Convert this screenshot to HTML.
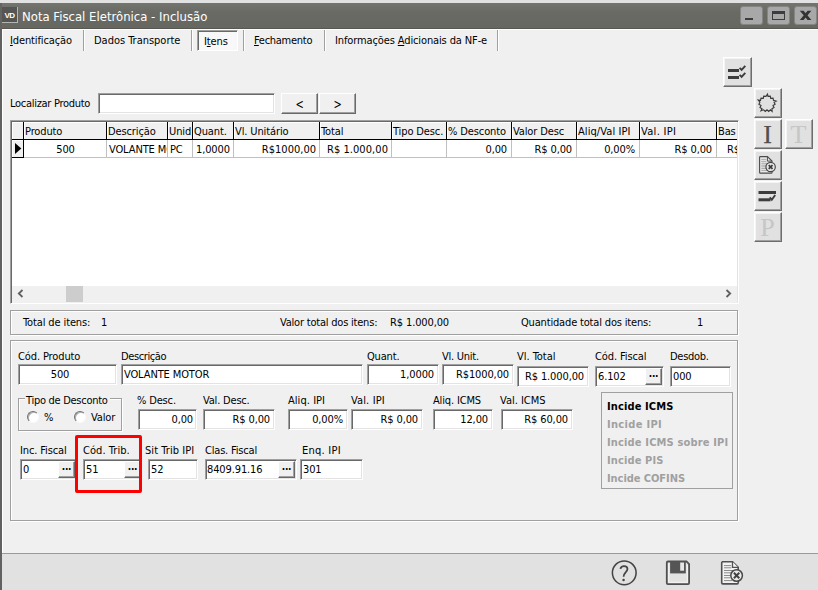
<!DOCTYPE html>
<html lang="pt-BR">
<head>
<meta charset="utf-8">
<title>Nota Fiscal Eletrônica - Inclusão</title>
<style>
html,body{margin:0;padding:0}
body{width:818px;height:590px;position:relative;overflow:hidden;background:#f0f0f0;
 font-family:"DejaVu Sans Condensed","Liberation Sans",sans-serif;font-size:11px;color:#000;letter-spacing:-0.12px}
.a{position:absolute}
.t{position:absolute;white-space:nowrap;line-height:13px;height:13px}
.r{text-align:right}
.c{text-align:center}
u{text-decoration:underline;text-underline-offset:1px}
.inp{position:absolute;background:#fff;box-sizing:border-box;border:1px solid;border-color:#a0a0a0 #fff #fff #a0a0a0;
 box-shadow:inset 1px 1px 0 #696969,inset -1px -1px 0 #e3e3e3}
.btn{position:absolute;background:#f0f0f0;box-sizing:border-box;border:1px solid;border-color:#fff #696969 #696969 #fff;
 box-shadow:inset -1px -1px 0 #a0a0a0}
.tb{position:absolute;background:#e1e1e1;box-sizing:border-box;border:1px solid;border-color:#fff #6d6d6d #6d6d6d #fff;
 box-shadow:inset -1px -1px 0 #a0a0a0,inset 1px 1px 0 #f4f4f4;width:28px;height:30px}
.sep{position:absolute;width:1px;height:21px;top:30px;background:#a0a0a0;box-shadow:1px 0 0 #fff}
.pnl{position:absolute;box-sizing:border-box;border:1px solid #a0a0a0;box-shadow:1px 1px 0 #fff,inset 1px 1px 0 #fff}
.hc{position:absolute;top:122px;height:18px;box-sizing:border-box;background:#f0f0f0;border-right:1px solid #000;border-bottom:1px solid #000;
 box-shadow:inset 1px 1px 0 #fff;overflow:hidden}
.hc span{position:absolute;left:1px;top:3px;line-height:13px;white-space:nowrap}
.dc{position:absolute;top:140px;height:18px;box-sizing:border-box;background:#fff;border-right:1px solid #c0c0c0;border-bottom:1px solid #c0c0c0;overflow:hidden}
.dc span{position:absolute;top:3px;line-height:13px;white-space:nowrap}
.dots{position:absolute;left:0;right:0;top:0;bottom:0}
.inc{position:absolute;left:607px;letter-spacing:0.12px;font-weight:bold;color:#a0a0a0;white-space:nowrap;line-height:13px;font-family:"DejaVu Sans Condensed","Liberation Sans",sans-serif}
</style>
</head>
<body>

<!-- window chrome -->
<div class="a" style="left:0;top:0;width:818px;height:3px;background:#e2e2e2"></div>
<div class="a" style="left:0;top:3px;width:818px;height:26px;background:linear-gradient(#74756f,#696a64 35%,#666761)"></div>
<div class="a" style="left:0;top:28px;width:818px;height:1px;background:#575852"></div>
<div class="a" style="left:0;top:3px;width:2px;height:26px;background:#636362"></div>
<div class="a" style="left:0;top:29px;width:2px;height:561px;background:#616161"></div>
<div class="a" style="left:2px;top:29px;width:816px;height:1px;background:#fff"></div>
<div class="a" style="left:2px;top:29px;width:1px;height:524px;background:#fff"></div>

<!-- app icon -->
<div class="a" style="left:2px;top:7px;width:16px;height:16px;background:#555654;border-right:1px solid #b4b4b0;border-bottom:1px solid #b4b4b0;box-sizing:border-box"></div>
<div class="t" style="left:4.5px;top:11px;width:12px;font-size:8px;font-weight:bold;color:#fff;line-height:10px;height:10px;letter-spacing:-0.7px;font-family:'Liberation Sans',sans-serif">VD</div>
<div class="t" id="title" style="left:22px;top:9px;font-size:13px;line-height:16px;height:16px;color:#fff;letter-spacing:0">Nota Fiscal Eletrônica - Inclusão</div>

<!-- caption buttons -->
<div class="a" style="left:740px;top:6px;width:23px;height:19px;box-sizing:border-box;background:#a8a8a8;border:1px solid #858583;border-radius:3px"></div>
<div class="a" style="left:767px;top:6px;width:23px;height:19px;box-sizing:border-box;background:#a8a8a8;border:1px solid #858583;border-radius:3px"></div>
<div class="a" style="left:794px;top:6px;width:23px;height:19px;box-sizing:border-box;background:#a8a8a8;border:1px solid #858583;border-radius:3px"></div>
<div class="a" style="left:745px;top:18px;width:8px;height:2px;background:#3c3c3c"></div>
<div class="a" style="left:772px;top:11px;width:13px;height:9px;box-sizing:border-box;border:1px solid #3c3c3c;border-top-width:3px"></div>
<svg class="a" style="left:799px;top:10px" width="14" height="11" viewBox="0 0 14 11"><path d="M0.800 0.800 H4.600 L12.400 10 H8.600Z" fill="#333"/><path d="M12.400 0.800 H8.600 L0.800 10 H4.600Z" fill="#333"/></svg>

<!-- tabs -->
<div class="t" style="left:10px;top:34px"><u>I</u>dentificação</div>
<div class="sep" style="left:83px"></div>
<div class="t" style="left:94px;top:34px;letter-spacing:-0.02px">Dados Transporte</div>
<div class="sep" style="left:191px"></div>
<div class="a" style="left:197px;top:30px;width:41px;height:21px;box-sizing:border-box;background:#f8f8f8;border:1px solid;border-color:#a0a0a0 #fff #fff #a0a0a0;box-shadow:inset 1px 1px 0 #696969"></div>
<div class="t" style="left:204px;top:35px">I<u>t</u>ens</div>
<div class="sep" style="left:243px"></div>
<div class="t" style="left:254px;top:34px;letter-spacing:-0.27px"><u>F</u>echamento</div>
<div class="sep" style="left:324px"></div>
<div class="t" style="left:335px;top:34px">Informações <u>A</u>dicionais da NF-e</div>
<div class="sep" style="left:497px"></div>

<!-- search -->
<div class="t" style="left:10px;top:97px;letter-spacing:-0.29px">Localizar Produto</div>
<div class="inp" style="left:98px;top:93px;width:177px;height:21px"></div>
<div class="btn" style="left:281px;top:93px;width:37px;height:21px"></div>
<div class="btn" style="left:319px;top:93px;width:37px;height:21px"></div>
<div class="t c" style="left:281px;top:98px;width:37px;transform:scaleY(1.3)">&lt;</div>
<div class="t c" style="left:319px;top:98px;width:37px;transform:scaleY(1.3)">&gt;</div>

<!-- grid -->
<div class="a" style="left:10px;top:120px;width:729px;height:184px;box-sizing:border-box;background:#fff;border:1px solid;border-color:#a0a0a0 #fff #fff #a0a0a0;box-shadow:inset 1px 1px 0 #696969,inset -1px -1px 0 #e3e3e3"></div>
<div class="a" id="gridclip" style="left:0;top:0;width:737px;height:302px;overflow:hidden">
<div class="hc" style="left:12px;width:12px"></div>
<div class="hc" style="left:24px;width:83px"><span>Produto</span></div>
<div class="hc" style="left:107px;width:61px"><span>Descrição</span></div>
<div class="hc" style="left:168px;width:25px"><span>Unid</span></div>
<div class="hc" style="left:193px;width:41px"><span>Quant.</span></div>
<div class="hc" style="left:234px;width:86px"><span>Vl. Unitário</span></div>
<div class="hc" style="left:320px;width:72px"><span>Total</span></div>
<div class="hc" style="left:392px;width:55px"><span>Tipo Desc.</span></div>
<div class="hc" style="left:447px;width:65px"><span>% Desconto</span></div>
<div class="hc" style="left:512px;width:65px"><span>Valor Desc</span></div>
<div class="hc" style="left:577px;width:63px"><span style="letter-spacing:0.08px">Aliq/Val IPI</span></div>
<div class="hc" style="left:640px;width:77px"><span style="letter-spacing:0.3px">Val. IPI</span></div>
<div class="hc" style="left:717px;width:60px"><span>Bas</span></div>

<div class="dc" style="left:12px;width:12px;background:#f0f0f0;border-right:1px solid #000;border-bottom:1px solid #000;box-shadow:inset 1px 1px 0 #fff"></div>
<svg class="a" style="left:15px;top:143px" width="7" height="11" viewBox="0 0 7 11"><path d="M0 0 L6.300 5.500 L0 11Z" fill="#000"/></svg>
<div class="dc" style="left:24px;width:83px"><span class="c" style="left:0;width:83px">500</span></div>
<div class="dc" style="left:107px;width:61px"><span style="left:2px">VOLANTE MOTOR</span></div>
<div class="dc" style="left:168px;width:25px"><span style="left:2px">PC</span></div>
<div class="dc" style="left:193px;width:41px"><span style="left:3px">1,0000</span></div>
<div class="dc" style="left:234px;width:86px"><span class="r" style="right:3px;letter-spacing:0.01px">R$1000,00</span></div>
<div class="dc" style="left:320px;width:72px"><span class="r" style="right:3px;letter-spacing:0.06px">R$ 1.000,00</span></div>
<div class="dc" style="left:392px;width:55px"></div>
<div class="dc" style="left:447px;width:65px"><span class="r" style="right:4px">0,00</span></div>
<div class="dc" style="left:512px;width:65px"><span class="r" style="right:4px">R$ 0,00</span></div>
<div class="dc" style="left:577px;width:63px"><span class="r" style="right:4px">0,00%</span></div>
<div class="dc" style="left:640px;width:77px"><span class="r" style="right:4px">R$ 0,00</span></div>
<div class="dc" style="left:717px;width:60px"><span style="left:10px">R$ 0,00</span></div>
</div>
<!-- scrollbar -->
<div class="a" style="left:12px;top:286px;width:725px;height:17px;background:#f0f0f0"></div>
<div class="a" style="left:66px;top:286px;width:17px;height:16px;background:#cdcdcd"></div>
<svg class="a" style="left:17px;top:289px" width="7" height="9" viewBox="0 0 7 9"><path d="M5.5 1 L1.8 4.5 L5.5 8" stroke="#606060" stroke-width="1.8" fill="none"/></svg>
<svg class="a" style="left:725px;top:289px" width="7" height="9" viewBox="0 0 7 9"><path d="M1.5 1 L5.2 4.5 L1.5 8" stroke="#606060" stroke-width="1.8" fill="none"/></svg>

<!-- right tool buttons -->
<div class="tb" style="left:723px;top:57px;width:29px;height:30px"></div>
<svg class="a" style="left:723px;top:57px" width="29" height="30" viewBox="0 0 29 30">
 <rect x="5" y="12" width="11" height="3" fill="#3c3c3c"/><rect x="5" y="19" width="11" height="3" fill="#3c3c3c"/>
 <path d="M16.600 10.800 L18.600 12.800 L22.300 8.800" stroke="#3c3c3c" stroke-width="1.9" fill="none"/>
 <path d="M16.600 17.900 L18.600 19.900 L22.300 15.900" stroke="#3c3c3c" stroke-width="1.9" fill="none"/>
</svg>
<div class="tb" style="left:754px;top:88px"></div>
<svg class="a" style="left:0;top:0" width="818" height="130" viewBox="0 0 818 130"><path d="M767.5 94.1 L768.0 96.4 L770.3 96.1 L770.7 98.4 L773.0 98.1 L773.5 100.4 L776.1 101.1 L774.1 102.2 L775.1 104.3 L773.0 105.5 L774.0 107.6 L772.0 108.7 L772.1 111.4 L770.4 109.8 L768.7 111.4 L767.0 109.8 L765.3 111.4 L763.6 109.8 L761.0 110.8 L762.0 108.7 L760.0 107.6 L761.0 105.5 L758.9 104.3 L759.9 102.2 L758.2 100.1 L760.5 100.4 L761.0 98.1 L763.3 98.4 L763.7 96.1 L766.0 96.4Z" fill="none" stroke="#3a3a3a" stroke-width="1.15" stroke-linejoin="miter"/></svg>
<div class="tb" style="left:754px;top:119px"></div>
<div class="t c" style="left:754px;top:119px;width:27px;height:30px;line-height:31px;font-family:'Liberation Serif',serif;font-size:26px;color:#505050;letter-spacing:0;-webkit-text-stroke:0.25px #505050">I</div>
<div class="tb" style="left:785px;top:119px"></div>
<div class="t c" style="left:785px;top:119px;width:27px;height:30px;line-height:31px;font-family:'Liberation Serif',serif;font-size:26px;color:#c6c6c6;letter-spacing:0">T</div>
<div class="tb" style="left:754px;top:150px"></div>
<svg class="a" style="left:754px;top:150px" width="28" height="30" viewBox="0 0 28 30">
 <path d="M6.300 6.600 H13.400 L18 11.100 V22.400 Q18 23.100 17.300 23.100 H6.300 Q5.600 23.100 5.600 22.400 V7.300 Q5.600 6.600 6.300 6.600Z" fill="#e9e9e9" stroke="#4c4c4c" stroke-width="1.100"/>
 <path d="M13.400 6.600 V11.100 H18" fill="none" stroke="#4c4c4c" stroke-width="1"/>
 <path d="M7.300 9.400H12.200 M7.300 11.400H12.200 M7.300 13.300H13 M7.300 15.200H12 M7.300 16.800H11.500 M7.300 18.500H12 M7.300 20.400H13.500" stroke="#a4a4a4" stroke-width="0.900"/>
 <circle cx="16.6" cy="17" r="4.700" fill="#e6e6e6" stroke="#484848" stroke-width="1.200"/>
 <path d="M14.700 15.100 L18.500 18.900 M18.500 15.100 L14.700 18.900" stroke="#3a3a3a" stroke-width="1.700"/>
</svg>
<div class="tb" style="left:754px;top:181px"></div>
<svg class="a" style="left:754px;top:181px" width="28" height="29" viewBox="0 0 28 29">
 <rect x="4.500" y="10" width="17.500" height="3" fill="#3c3c3c"/><rect x="4.500" y="17.300" width="12" height="3" fill="#3c3c3c"/>
 <path d="M15.700 16.400 L17.800 18.700 L21.200 14" stroke="#3c3c3c" stroke-width="1.9" fill="none"/>
</svg>
<div class="tb" style="left:754px;top:212px"></div>
<div class="t c" style="left:754px;top:212px;width:27px;height:30px;line-height:31px;font-family:'Liberation Serif',serif;font-size:26px;color:#c6c6c6;letter-spacing:0">P</div>

<!-- summary panel -->
<div class="pnl" style="left:10px;top:310px;width:728px;height:25px"></div>
<div class="t" style="left:23px;top:316px">Total de itens:</div>
<div class="t" style="left:101px;top:316px">1</div>
<div class="t" style="left:280px;top:316px;letter-spacing:-0.21px">Valor total dos itens:</div>
<div class="t" style="left:390px;top:316px">R$ 1.000,00</div>
<div class="t" style="left:521px;top:316px;letter-spacing:-0.17px">Quantidade total dos itens:</div>
<div class="t" style="left:697px;top:316px">1</div>

<!-- detail panel -->
<div class="pnl" style="left:10px;top:340px;width:728px;height:181px"></div>

<div class="t" style="left:18px;top:350px">Cód. Produto</div>
<div class="inp" style="left:18px;top:364px;width:99px;height:21px"></div>
<div class="t c" style="left:18px;top:368px;width:84px">500</div>
<div class="t" style="left:121px;top:350px;letter-spacing:-0.4px">Descrição</div>
<div class="inp" style="left:121px;top:364px;width:242px;height:21px"></div>
<div class="t" style="left:124px;top:368px">VOLANTE MOTOR</div>
<div class="t" style="left:367px;top:350px;letter-spacing:-0.18px">Quant.</div>
<div class="inp" style="left:367px;top:364px;width:72px;height:21px"></div>
<div class="t r" style="left:367px;top:368px;width:67px">1,0000</div>
<div class="t" style="left:442px;top:350px;letter-spacing:-0.25px">Vl. Unit.</div>
<div class="inp" style="left:442px;top:364px;width:72px;height:21px"></div>
<div class="t r" style="left:442px;top:368px;width:67px">R$1000,00</div>
<div class="t" style="left:517px;top:350px;letter-spacing:-0.04px">Vl. Total</div>
<div class="inp" style="left:517px;top:366px;width:72px;height:21px"></div>
<div class="t r" style="left:517px;top:370px;width:67px">R$ 1.000,00</div>
<div class="t" style="left:595px;top:350px;letter-spacing:-0.11px">Cód. Fiscal</div>
<div class="inp" style="left:595px;top:366px;width:69px;height:21px"></div>
<div class="t" style="left:598px;top:370px">6.102</div>
<div class="btn" style="left:645px;top:368px;width:17px;height:17px"></div>
<div class="t c" style="left:645px;top:367px;width:17px;font-weight:bold;font-size:10px;letter-spacing:-0.3px">...</div>
<div class="t" style="left:670px;top:350px;letter-spacing:-0.29px">Desdob.</div>
<div class="inp" style="left:670px;top:366px;width:61px;height:21px"></div>
<div class="t" style="left:673px;top:370px">000</div>

<!-- group box -->
<div class="pnl" style="left:18px;top:398px;width:104px;height:33px"></div>
<div class="t" style="left:25px;top:394px;background:#f0f0f0;padding:0 2px 0 1px;letter-spacing:-0.28px">Tipo de Desconto</div>
<div class="a" style="left:27px;top:411px;width:12px;height:12px;box-sizing:border-box;border-radius:50%;background:#fff;border:1px solid;border-color:#707070 #fafafa #fafafa #707070;box-shadow:inset 1px 1px 0 #b0b0b0"></div>
<div class="t" style="left:44px;top:411px">%</div>
<div class="a" style="left:74px;top:411px;width:12px;height:12px;box-sizing:border-box;border-radius:50%;background:#fff;border:1px solid;border-color:#707070 #fafafa #fafafa #707070;box-shadow:inset 1px 1px 0 #b0b0b0"></div>
<div class="t" style="left:91px;top:411px">Valor</div>

<div class="t" style="left:137px;top:394px;letter-spacing:-0.16px">% Desc.</div>
<div class="inp" style="left:138px;top:409px;width:59px;height:21px"></div>
<div class="t r" style="left:138px;top:413px;width:55px">0,00</div>
<div class="t" style="left:203px;top:394px;letter-spacing:-0.19px">Val. Desc.</div>
<div class="inp" style="left:203px;top:409px;width:72px;height:21px"></div>
<div class="t r" style="left:203px;top:413px;width:67px">R$ 0,00</div>
<div class="t" style="left:288px;top:394px;letter-spacing:0.05px">Aliq. IPI</div>
<div class="inp" style="left:288px;top:409px;width:60px;height:21px"></div>
<div class="t r" style="left:288px;top:413px;width:55px">0,00%</div>
<div class="t" style="left:351px;top:394px;letter-spacing:0.13px">Val. IPI</div>
<div class="inp" style="left:351px;top:409px;width:72px;height:21px"></div>
<div class="t r" style="left:351px;top:413px;width:67px">R$ 0,00</div>
<div class="t" style="left:433px;top:394px;letter-spacing:-0.16px">Aliq. ICMS</div>
<div class="inp" style="left:433px;top:409px;width:60px;height:21px"></div>
<div class="t r" style="left:433px;top:413px;width:55px">12,00</div>
<div class="t" style="left:500px;top:394px;letter-spacing:-0.01px">Val. ICMS</div>
<div class="inp" style="left:501px;top:409px;width:72px;height:21px"></div>
<div class="t r" style="left:501px;top:413px;width:67px">R$ 60,00</div>

<!-- incide box -->
<div class="a" style="left:601px;top:392px;width:132px;height:97px;box-sizing:border-box;border:1px solid #a0a0a0"></div>
<div class="inc" style="top:400px;color:#000">Incide ICMS</div>
<div class="inc" style="top:418px;letter-spacing:0.32px">Incide IPI</div>
<div class="inc" style="top:436px;letter-spacing:0.16px">Incide ICMS sobre IPI</div>
<div class="inc" style="top:454px">Incide PIS</div>
<div class="inc" style="top:472px;letter-spacing:-0.06px">Incide COFINS</div>

<!-- bottom row -->
<div class="t" style="left:20px;top:444px">Inc. Fiscal</div>
<div class="inp" style="left:20px;top:459px;width:57px;height:21px"></div>
<div class="t" style="left:23px;top:463px">0</div>
<div class="btn" style="left:58px;top:461px;width:17px;height:17px"></div>
<div class="t c" style="left:58px;top:460px;width:17px;font-weight:bold;font-size:10px;letter-spacing:-0.3px">...</div>

<div class="t" style="left:83px;top:444px;letter-spacing:0.05px">Cód. Trib.</div>
<div class="inp" style="left:83px;top:459px;width:59px;height:21px"></div>
<div class="t" style="left:86px;top:463px">51</div>
<div class="btn" style="left:124px;top:461px;width:17px;height:17px"></div>
<div class="t c" style="left:124px;top:460px;width:17px;font-weight:bold;font-size:10px;letter-spacing:-0.3px">...</div>
<div class="a" style="left:75px;top:435px;width:67px;height:58px;box-sizing:border-box;border:3px solid #ff0000;border-radius:2px"></div>

<div class="t" style="left:145px;top:444px;letter-spacing:0.06px">Sit Trib IPI</div>
<div class="inp" style="left:148px;top:459px;width:50px;height:21px"></div>
<div class="t" style="left:151px;top:463px">52</div>

<div class="t" style="left:205px;top:444px;letter-spacing:-0.19px">Clas. Fiscal</div>
<div class="inp" style="left:205px;top:459px;width:92px;height:21px"></div>
<div class="t" style="left:207px;top:463px">8409.91.16</div>
<div class="btn" style="left:278px;top:461px;width:17px;height:17px"></div>
<div class="t c" style="left:278px;top:460px;width:17px;font-weight:bold;font-size:10px;letter-spacing:-0.3px">...</div>

<div class="t" style="left:302px;top:444px;letter-spacing:0.24px">Enq. IPI</div>
<div class="inp" style="left:300px;top:459px;width:63px;height:21px"></div>
<div class="t" style="left:303px;top:463px">301</div>

<!-- bottom bar -->
<div class="a" style="left:2px;top:553px;width:816px;height:37px;background:#e1e1e1;border-top:1px solid #9a9a9a;box-sizing:border-box"></div>
<svg class="a" style="left:608px;top:556px" width="140" height="34" viewBox="608 556 140 34">
 <circle cx="624.25" cy="572.8" r="11.850" fill="none" stroke="#444" stroke-width="1.550"/>
 <path d="M620.400 568.900 C620.800 566.900 622.300 566 624 566 C626.200 566 627.500 567.300 627.500 569.100 C627.500 571.900 623.600 572.700 623.600 576.700" fill="none" stroke="#444" stroke-width="1.750"/>
 <circle cx="623.55" cy="579.9" r="1.250" fill="#444"/>
 <path d="M668 561.500 H686.500 L689.100 564.200 V583 Q689.100 584.100 688 584.100 H668 Q666.800 584.100 666.800 583 V562.700 Q666.800 561.500 668 561.500Z" fill="#e2e2e2" stroke="#505050" stroke-width="1.800"/>
 <path d="M668.700 563.400 V582.300 H687.300 V565" fill="none" stroke="#f6f6f6" stroke-width="1"/>
 <rect x="670.1" y="561.5" width="15.700" height="11.900" fill="#555"/>
 <rect x="680.2" y="562.5" width="3.800" height="8.200" fill="#e6e6e6"/>
 <path d="M722 561.700 H732.500 L738.200 567.400 V582.800 Q738.200 583.900 737.100 583.900 H722.800 Q721.700 583.900 721.700 582.800 V562.800 Q721.700 561.700 722.800 561.700Z" fill="#f2f2f2" stroke="#505050" stroke-width="1.600"/>
 <path d="M732.500 561.700 V567.400 H738.200" fill="#f6f6f6" stroke="#505050" stroke-width="1.300"/>
 <path d="M724 565.600H731.300 M724 567.800H731.300 M724 570.500H734 M724 572.800H731 M724 575.500H730 M724 577.800H730 M724 580.600H732" stroke="#8a8a8a" stroke-width="1"/>
 <circle cx="736.6" cy="575.5" r="5.800" fill="#ececec" stroke="#484848" stroke-width="1.500"/>
 <path d="M733.900 572.800 L739.300 578.200 M739.300 572.800 L733.900 578.200" stroke="#444" stroke-width="2"/>
</svg>

</body>
</html>
